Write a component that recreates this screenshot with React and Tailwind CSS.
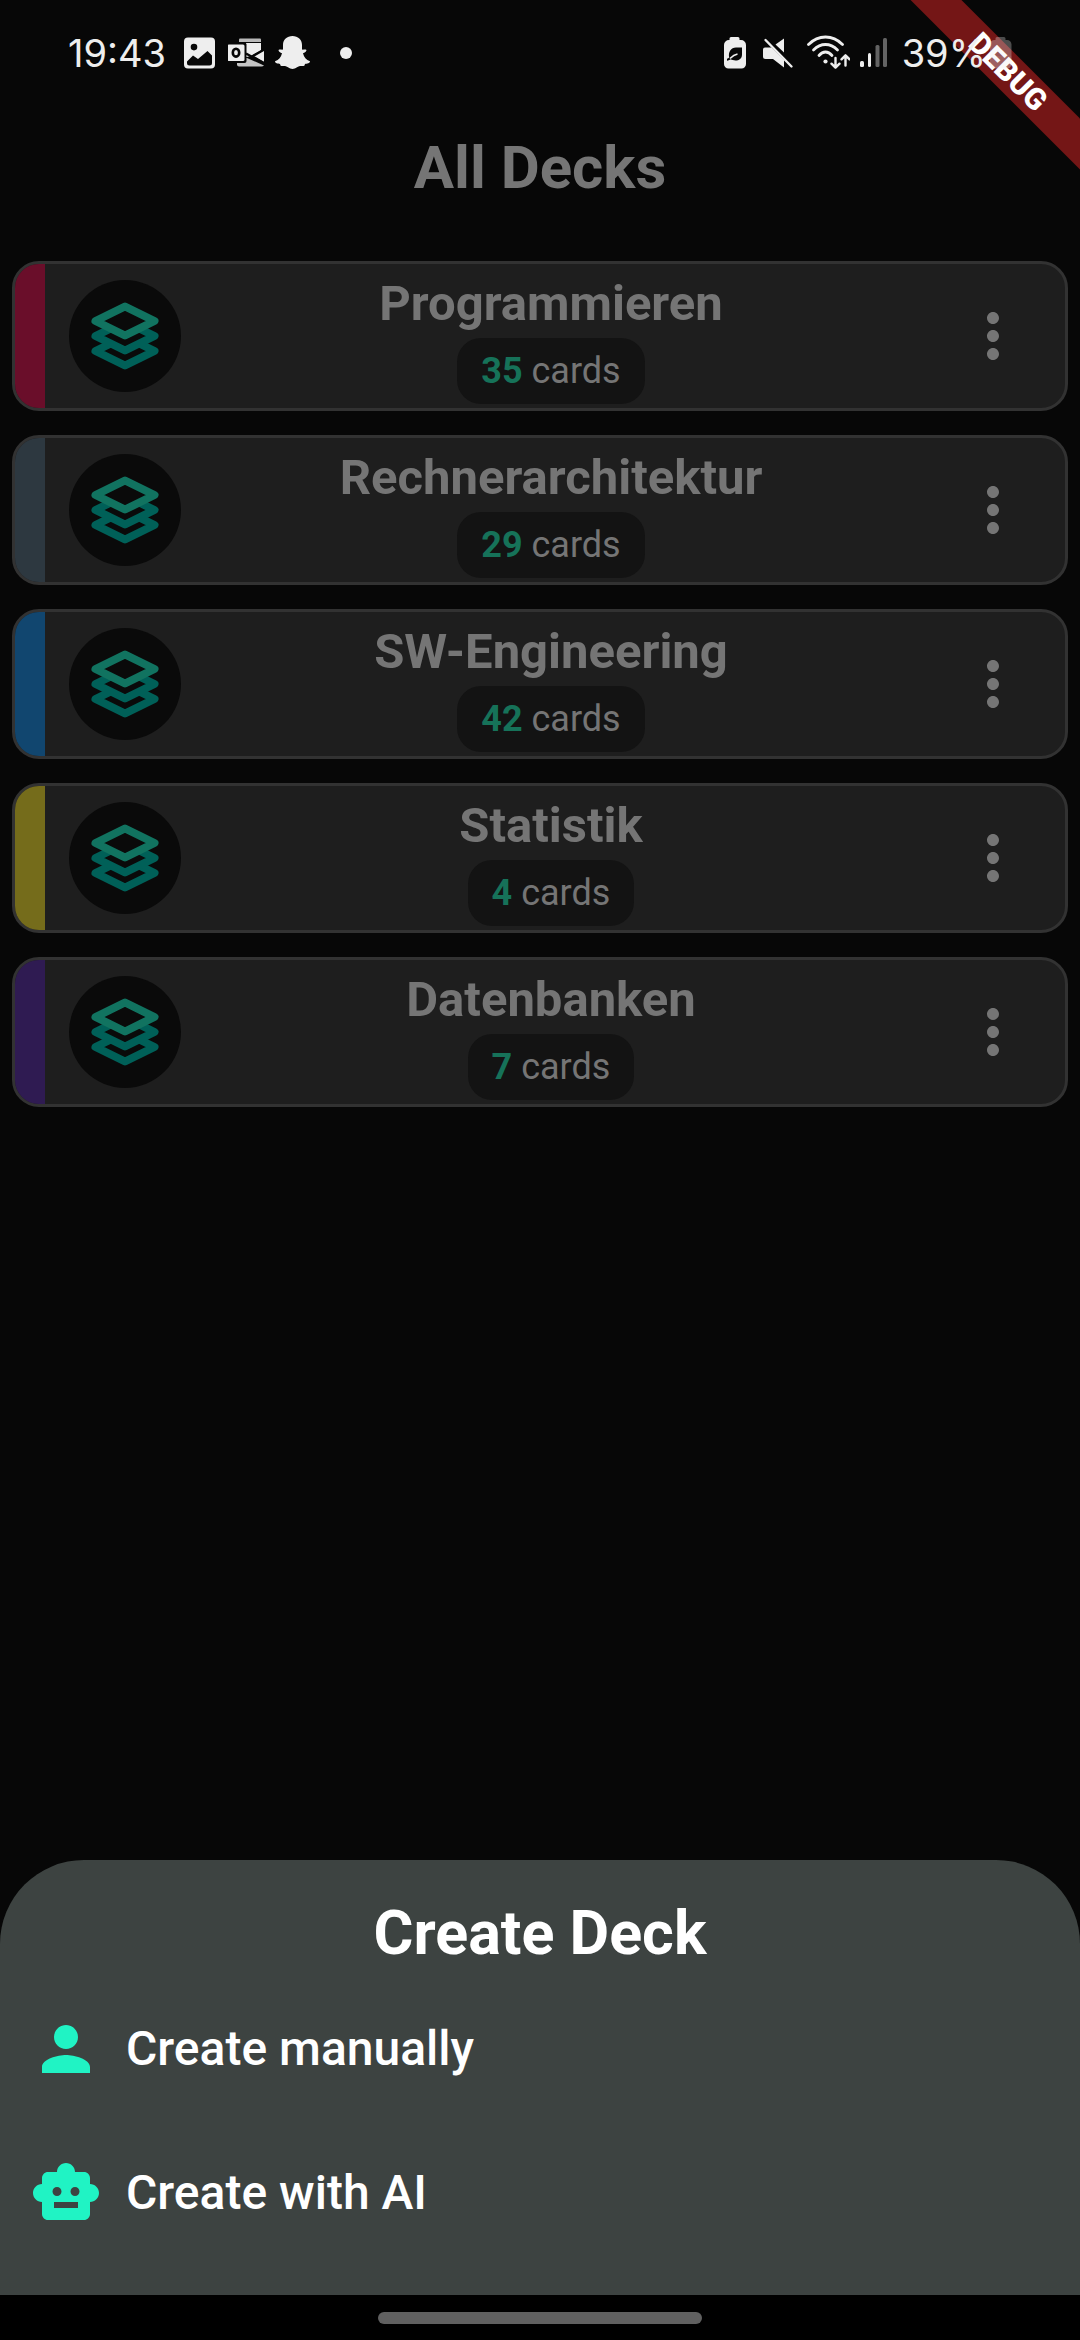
import { MdMoreVert, MdPerson, MdSmartToy } from "react-icons/md";

const decks = [
  { name: "Programmieren", cards: 35, stripe: "bg-[#6a0e2a]" },
  { name: "Rechnerarchitektur", cards: 29, stripe: "bg-[#2d3840]" },
  { name: "SW-Engineering", cards: 42, stripe: "bg-[#11466f]" },
  { name: "Statistik", cards: 4, stripe: "bg-[#756c1b]" },
  { name: "Datenbanken", cards: 7, stripe: "bg-[#2f1b52]" },
];

function ImageIcon() {
  return (
    <svg viewBox="0 0 36 36" className="size-9" aria-hidden="true">
      <path
        fill="currentColor"
        fillRule="evenodd"
        d="M6 2.500h23a4 4 0 0 1 4 4v23a4 4 0 0 1-4 4H6a4 4 0 0 1-4-4v-23a4 4 0 0 1 4-4zM12 8.800a3.300 3.300 0 1 0 0 6.600 3.300 3.300 0 0 0 0-6.600zM5 26.500v1.500q0 2.500 2.500 2.500h20q2.500 0 2.500-2.500v-7.500l-4.500-4.500-9.500 8-5-3.500z"
      />
    </svg>
  );
}

function OutlookIcon() {
  return (
    <svg viewBox="0 0 36 36" className="size-9" aria-hidden="true">
      <path fill="#b9b9b9" d="M11 4.500a1 1 0 0 1 1-1h20a1 1 0 0 1 1 1V7H11z" />
      <path fill="currentColor" d="M10 8h23v7.500l-10 5.500L10 24z" />
      <path fill="currentColor" d="M36.500 15v12l-10.500-6z" />
      <path fill="#c4c4c4" d="M9 23h10L36 30.500q-1 1-2.500 1H11a2 2 0 0 1-2-2z" />
      <path d="M18 18.500L37 29M24 21.500L37 14" stroke="#070707" strokeWidth="2.400" />
      <rect x="-1" y="7.500" width="19.500" height="20.500" rx="2" fill="#070707" />
      <rect x="-0.500" y="9.500" width="17" height="16.500" rx="1.500" fill="currentColor" />
      <ellipse cx="8" cy="17.700" rx="3.200" ry="3.900" fill="none" stroke="#070707" strokeWidth="2.600" />
    </svg>
  );
}

function GhostIcon() {
  return (
    <svg viewBox="0 0 36 36" className="size-9" aria-hidden="true">
      <path
        fill="currentColor"
        d="M18.500 1C24 1 28 4.500 28 10v4.500c1.500.500 3-.700 4.200.300 1 1-.700 2.500-3.200 3.500 1 4 3 6.500 7 8 0 2-3 2.300-5 2.800-.500 1-.300 2-1.500 2-2.500-.300-4.500-.300-6.500 1.200-1.700 1.200-3 1.700-4.500 1.700s-2.800-.500-4.500-1.700c-2-1.500-4-1.500-6.500-1.200-1.200 0-1-1-1.500-2-2-.500-5-.800-5-2.800 4-1.500 6-4 7-8-2.500-1-4.200-2.500-3.200-3.500 1.200-1 2.700.200 4.200-.300V10c0-5.500 4-9 9.500-9z"
      />
    </svg>
  );
}

function BatterySaverIcon() {
  return (
    <svg viewBox="0 0 30 36" className="h-9 w-[30px]" aria-hidden="true">
      <path fill="currentColor" d="M12 2h7a1.500 1.500 0 0 1 1.500 1.500V5H22a5 5 0 0 1 5 5v19a4.500 4.500 0 0 1-4.500 4.500h-13A4.500 4.500 0 0 1 5 29V10a5 5 0 0 1 5-5h.500V3.500A1.500 1.500 0 0 1 12 2z" />
      <path fill="#070707" d="M23 12.500v7c0 4-3 6-6.500 6-2 0-3.500-.500-4.800-1.200-1 .500-2 1-3.700 1.500v-2c.900-.500 1.600-.800 2.200-1.400C9 17 12 12.500 17 12.500z" />
      <path d="M11 23.500c2-2 4-3.800 7.500-4.500" fill="none" stroke="currentColor" strokeWidth="1.600" />
    </svg>
  );
}

function MuteIcon() {
  return (
    <svg viewBox="0 0 38 36" className="h-9 w-[38px]" aria-hidden="true">
      <path fill="currentColor" d="M25 3.500v14L16.500 9.500zM6 12.500h6.500L25 25v7.500L14 24H6.500Q4 24 4 21.500v-7q0-2 2-2z" />
      <path d="M6.500 5l26 26.500" stroke="currentColor" strokeWidth="2.400" strokeLinecap="round" />
    </svg>
  );
}

function WifiIcon() {
  return (
    <svg viewBox="0 0 43 36" className="h-9 w-[43px]" fill="none" stroke="currentColor" strokeLinecap="round" aria-hidden="true">
      <path d="M1.500 9.500Q9 2 18.500 2t17 7.500" strokeWidth="2.800" />
      <path d="M6.500 15Q12 9.500 18.500 9.500T30.500 15" strokeWidth="2.800" />
      <path d="M12 20.500Q15 17 18.500 17t6.500 3.500" strokeWidth="2.800" />
      <circle cx="18.500" cy="26.500" r="2.100" fill="currentColor" stroke="none" />
      <path d="M28.500 23v9.500m-4-3.800l4 4 4-4M38.500 30.500V20.500m-4 3.800l4-4 4 4" strokeWidth="2.400" strokeLinejoin="round" />
    </svg>
  );
}

function SignalIcon() {
  return (
    <svg viewBox="0 0 28 36" className="h-9 w-7" fill="currentColor" aria-hidden="true">
      <rect x="0" y="26" width="4" height="6" rx="1.500" />
      <rect x="8" y="18" width="3" height="14" rx="1.500" />
      <rect x="15.500" y="10" width="4" height="22" rx="1.500" opacity=".4" />
      <rect x="23" y="3" width="4" height="29" rx="1.500" opacity=".4" />
    </svg>
  );
}

function BatteryIcon() {
  return (
    <svg viewBox="0 0 22 36" className="h-9 w-[22px]" fill="currentColor" aria-hidden="true">
      <path opacity=".3" d="M7 2h7a1.500 1.500 0 0 1 1.500 1.500V5H17a4.500 4.500 0 0 1 4.500 4.500V21H0V9.500A4.500 4.500 0 0 1 4.500 5h1V3.500A1.500 1.500 0 0 1 7 2z" />
      <path opacity=".35" d="M0 21h21.500v8a4.500 4.500 0 0 1-4.500 4.500H4.500A4.500 4.500 0 0 1 0 29z" />
    </svg>
  );
}

function StackIcon() {
  return (
    <svg viewBox="0 0 72 72" className="size-18" fill="none" strokeWidth="8" strokeLinejoin="round" aria-hidden="true">
      <path d="M36 36.500L65.500 51 36 65.500 6.500 51z" stroke="#006058" />
      <path d="M36 21.500L65.500 36 36 50.500 6.500 36z" fill="#0a0a0a" stroke="#006058" />
      <path d="M36 6.500L65.500 21 36 35.500 6.500 21z" fill="#0a0a0a" stroke="#117360" />
    </svg>
  );
}

function StatusBar() {
  return (
    <div className="relative z-20 flex h-[106px] items-center justify-between px-[68px] font-['Inter',sans-serif] text-[38px] text-[#eeeeee]">
      <div className="flex items-center gap-2.5">
        <time className="mr-1.5">19:43</time>
        <ImageIcon />
        <OutlookIcon />
        <GhostIcon />
        <span className="ml-5 size-3 rounded-full bg-[#eeeeee]" />
      </div>
      <div className="flex items-center gap-2.5">
        <BatterySaverIcon />
        <MuteIcon />
        <WifiIcon />
        <SignalIcon />
        <div className="ml-1 flex items-center gap-1">
          <span>39%</span>
          <BatteryIcon />
        </div>
      </div>
    </div>
  );
}

function DebugBanner() {
  return (
    <div className="absolute top-0 right-0 z-10 size-[180px] overflow-hidden">
      <div className="absolute top-[54px] right-[-128px] h-9 w-[400px] rotate-45 bg-[#741616] text-center text-[30px] leading-9 font-black text-white">
        DEBUG
      </div>
    </div>
  );
}

function DeckCard({ deck }) {
  return (
    <li className="flex h-[150px] overflow-hidden rounded-[27px] border-3 border-[#323232] bg-[#1e1e1e]">
      <div className={`w-[30px] ${deck.stripe}`} />
      <div className="ml-6 flex size-28 items-center justify-center self-center rounded-full bg-[#0a0a0a]">
        <StackIcon />
      </div>
      <div className="flex flex-1 flex-col items-center justify-end gap-1.5 pb-1">
        <h2 className="text-[49px] leading-[56px] font-bold">{deck.name}</h2>
        <p className="rounded-3xl bg-[#131313] px-6 py-3 text-4xl leading-[42px]">
          <span className="font-bold text-[#167259]">{deck.cards}</span> cards
        </p>
      </div>
      <button type="button" aria-label={`Options for ${deck.name}`} className="flex w-36 items-center justify-center">
        <MdMoreVert className="size-18" />
      </button>
    </li>
  );
}

function SheetAction({ icon: Icon, label }) {
  return (
    <button type="button" className="flex h-36 w-full items-center gap-6 px-[30px] text-5xl font-medium">
      <Icon className="size-18 text-[#20f3c4]" />
      {label}
    </button>
  );
}

export default function App() {
  return (
    <div className="relative flex min-h-screen flex-col bg-[#070707] font-['Roboto',sans-serif] text-[#757575]">
      <StatusBar />
      <DebugBanner />
      <main className="flex-1">
        <h1 className="flex h-[123px] items-center justify-center text-6xl font-bold">All Decks</h1>
        <ul className="flex flex-col gap-6 px-3 pt-8">
          {decks.map((deck) => (
            <DeckCard key={deck.name} deck={deck} />
          ))}
        </ul>
      </main>
      <section aria-labelledby="create-title" className="rounded-t-[84px] bg-[#3d4341] pb-[30px] text-white">
        <h2 id="create-title" className="pt-[38px] pb-[9px] text-center text-[61px] leading-[70px] font-bold">
          Create Deck
        </h2>
        <SheetAction icon={MdPerson} label="Create manually" />
        <SheetAction icon={MdSmartToy} label="Create with AI" />
      </section>
      <div className="flex h-[45px] items-center justify-center bg-black">
        <div className="h-3 w-[324px] rounded-full bg-[#606060]" />
      </div>
    </div>
  );
}
